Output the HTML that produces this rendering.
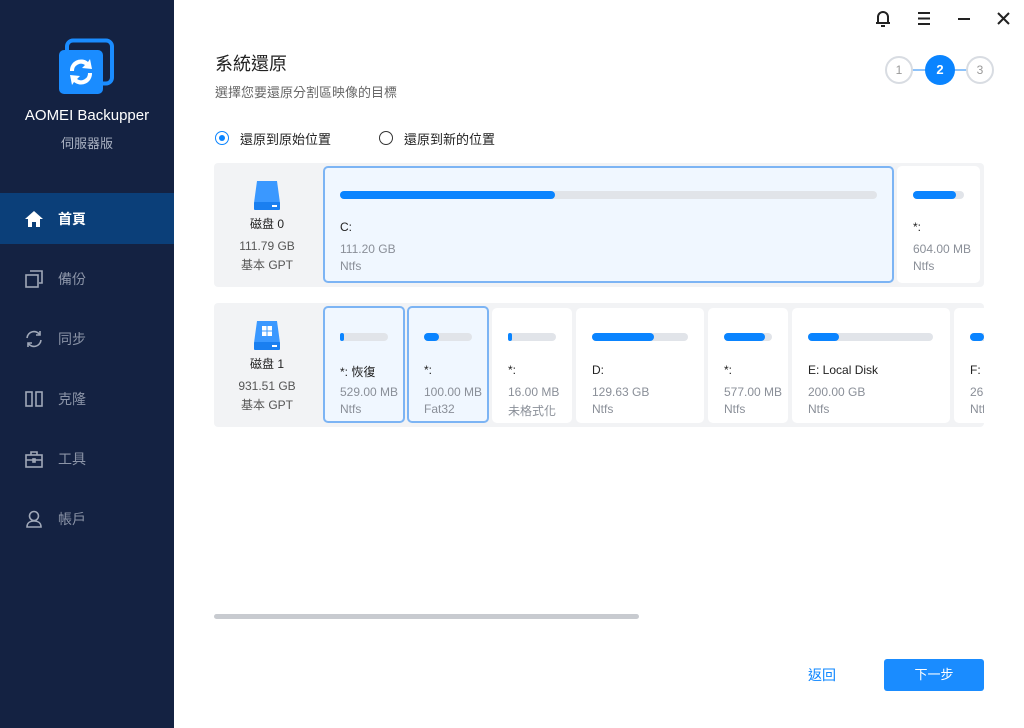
<!DOCTYPE html>
<html><head><meta charset="utf-8"><style>
*{margin:0;padding:0;box-sizing:border-box}
body{width:1024px;height:728px;overflow:hidden;background:#fff;font-family:"Liberation Sans","Noto Sans CJK TC",sans-serif;position:relative;color:#222}
.side{position:absolute;left:0;top:0;width:174px;height:728px;background:#142242}
.abs{position:absolute}
.nav{position:absolute;left:0;width:174px;height:51px;display:flex;align-items:center;padding-left:24px;color:#8b94a7;font-size:14px}
.nav svg{margin-right:14px}
.panel{position:absolute;left:214px;width:770px;height:124px;background:#f2f3f5;border-radius:4px;overflow:hidden}
.card{position:absolute;background:#fff;border-radius:5px;overflow:hidden;white-space:nowrap}
.card.sel{background:#f0f7ff;border:2px solid #7cb4f4}
.bar{position:absolute;height:8px;border-radius:4px;background:#e1e4e9}
.bar i{display:block;height:8px;border-radius:4px;background:#0a84ff}
.t{position:absolute;font-size:12px;color:#222}
.g{position:absolute;font-size:12px;color:#8a8f98}
.dl{position:absolute;text-align:center;width:100px;font-size:12px;color:#555}
</style></head><body>
<div class="side">
 <svg class="abs" style="left:58px;top:38px" width="58" height="58" viewBox="0 0 58 58">
  <rect x="9" y="2.5" width="45" height="43" rx="6" fill="none" stroke="#1a8cff" stroke-width="4"/>
  <rect x="1" y="12" width="44" height="44" rx="5" fill="#1a8cff"/>
  <path d="M12 33a11 11 0 0 1 18-9l2-3 2 10-10-1 3-3a7 7 0 0 0-11 6z" fill="#fff"/>
  <path d="M34 35a11 11 0 0 1-18 9l-2 3-2-10 10 1-3 3a7 7 0 0 0 11-6z" fill="#fff"/>
 </svg>
 <div class="abs" style="left:0;width:174px;top:107px;text-align:center;color:#fff;font-size:15px">AOMEI Backupper</div>
 <div class="abs" style="left:0;width:174px;top:133px;text-align:center;color:#aab2c2;font-size:13px">伺服器版</div>
 <div class="nav" style="top:193px;background:#0b3f79;color:#fff;font-weight:bold">
  <svg width="20" height="18" viewBox="0 0 20 18"><path d="M10 1L1 9h3v8h4v-5h4v5h4V9h3z" fill="#fff"/></svg>首頁</div>
 <div class="nav" style="top:253px"><svg width="20" height="20" viewBox="0 0 20 20" fill="none" stroke="#a0a8b8" stroke-width="1.6"><rect x="2" y="6" width="12" height="12"/><path d="M6 2h12v12h-3"/></svg>備份</div>
 <div class="nav" style="top:313px"><svg width="20" height="20" viewBox="0 0 20 20" fill="none" stroke="#a0a8b8" stroke-width="1.6"><path d="M3 9a7 7 0 0 1 13-3M17 11a7 7 0 0 1-13 3"/><path d="M16 2v4h-4M4 18v-4h4"/></svg>同步</div>
 <div class="nav" style="top:373px"><svg width="20" height="20" viewBox="0 0 20 20" fill="none" stroke="#a0a8b8" stroke-width="1.6"><rect x="2" y="3" width="6" height="14"/><rect x="12" y="3" width="6" height="14"/></svg>克隆</div>
 <div class="nav" style="top:433px"><svg width="20" height="20" viewBox="0 0 20 20" fill="none" stroke="#a0a8b8" stroke-width="1.6"><rect x="2" y="6" width="16" height="12"/><path d="M7 6V3h6v3M2 11h16"/><rect x="9" y="10" width="2" height="3"/></svg>工具</div>
 <div class="nav" style="top:493px"><svg width="20" height="20" viewBox="0 0 20 20" fill="none" stroke="#a0a8b8" stroke-width="1.6"><circle cx="10" cy="7" r="4.5"/><path d="M3 18c0-4 3-6 7-6s7 2 7 6z"/></svg>帳戶</div>
</div>

<svg class="abs" style="left:874px;top:10px" width="140" height="18" viewBox="0 0 140 18" fill="none" stroke="#222" stroke-width="2">
 <path d="M4 13V7a5 5 0 0 1 10 0v6zM2 13h14M7 16h4"/>
 <path d="M44 3h12M44 8.5h12M44 14h12"/>
 <path d="M84 9h12"/>
 <path d="M124 3l11 11M135 3l-11 11"/>
</svg>
<div class="abs" style="left:215px;top:50px;font-size:18px;color:#222">系統還原</div>
<div class="abs" style="left:215px;top:82px;font-size:13px;color:#666">選擇您要還原分割區映像的目標</div>
<div class="abs" style="left:906px;top:69px;width:20px;height:2px;background:#8ec3fa"></div>
<div class="abs" style="left:946px;top:69px;width:26px;height:2px;background:#8ec3fa"></div>
<div class="abs" style="left:885px;top:56px;width:28px;height:28px;border-radius:50%;border:2px solid #d8dce2;background:#fff;text-align:center;line-height:24px;font-size:12px;color:#999">1</div>
<div class="abs" style="left:925px;top:55px;width:30px;height:30px;border-radius:50%;background:#0a84ff;text-align:center;line-height:30px;font-size:13px;color:#fff;font-weight:bold">2</div>
<div class="abs" style="left:966px;top:56px;width:28px;height:28px;border-radius:50%;border:2px solid #d8dce2;background:#fff;text-align:center;line-height:24px;font-size:12px;color:#999">3</div>

<div class="abs" style="left:215px;top:131px;width:14px;height:14px;border-radius:50%;border:1.5px solid #0a84ff"><div style="margin:2.5px;width:6px;height:6px;border-radius:50%;background:#0a84ff"></div></div>
<div class="abs" style="left:240px;top:129px;font-size:13px">還原到原始位置</div>
<div class="abs" style="left:379px;top:131px;width:14px;height:14px;border-radius:50%;border:1.5px solid #333"></div>
<div class="abs" style="left:404px;top:129px;font-size:13px">還原到新的位置</div>

<div class="panel" style="top:163px">
 <svg class="abs" style="left:38px;top:17px" width="30" height="32" viewBox="0 0 30 32"><path d="M5 1h20l3 22H2z" fill="#3a98ff"/><rect x="2" y="22" width="26" height="8" rx="1" fill="#1a7ff0"/><rect x="20" y="25" width="5" height="2" fill="#fff"/></svg>
 <div class="dl" style="left:3px;top:52px;color:#222">磁盘 0</div>
 <div class="dl" style="left:3px;top:76px">111.79 GB</div>
 <div class="dl" style="left:3px;top:93px">基本 GPT</div>
 <div class="card sel" style="left:109px;top:3px;width:571px;height:117px">
  <div class="bar" style="left:15px;top:23px;width:537px"><i style="width:215px"></i></div>
  <div class="t" style="left:15px;top:52px">C:</div>
  <div class="g" style="left:15px;top:74px">111.20 GB</div>
  <div class="g" style="left:15px;top:91px">Ntfs</div>
 </div>
 <div class="card" style="left:683px;top:3px;width:83px;height:117px">
  <div class="bar" style="left:16px;top:25px;width:51px"><i style="width:43px"></i></div>
  <div class="t" style="left:16px;top:54px">*:</div>
  <div class="g" style="left:16px;top:76px">604.00 MB</div>
  <div class="g" style="left:16px;top:93px">Ntfs</div>
 </div>
</div>

<div class="panel" style="top:303px">
 <svg class="abs" style="left:38px;top:17px" width="30" height="32" viewBox="0 0 30 32"><path d="M5 1h20l3 22H2z" fill="#3a98ff"/><rect x="2" y="22" width="26" height="8" rx="1" fill="#1a7ff0"/><rect x="20" y="25" width="5" height="2" fill="#fff"/><path d="M10 6h4.5v4.5H10zM15.5 6H20v4.5h-4.5zM10 11.5h4.5V16H10zM15.5 11.5H20V16h-4.5z" fill="#fff"/></svg>
 <div class="dl" style="left:3px;top:52px;color:#222">磁盘 1</div>
 <div class="dl" style="left:3px;top:76px">931.51 GB</div>
 <div class="dl" style="left:3px;top:93px">基本 GPT</div>
 <div class="card sel" style="left:109px;top:3px;width:82px;height:117px">
  <div class="bar" style="left:15px;top:25px;width:48px"><i style="width:4px"></i></div>
  <div class="t" style="left:15px;top:55px">*: 恢復</div>
  <div class="g" style="left:15px;top:77px">529.00 MB</div>
  <div class="g" style="left:15px;top:94px">Ntfs</div>
 </div>
 <div class="card sel" style="left:193px;top:3px;width:82px;height:117px">
  <div class="bar" style="left:15px;top:25px;width:48px"><i style="width:15px"></i></div>
  <div class="t" style="left:15px;top:55px">*:</div>
  <div class="g" style="left:15px;top:77px">100.00 MB</div>
  <div class="g" style="left:15px;top:94px">Fat32</div>
 </div>
 <div class="card" style="left:278px;top:5px;width:80px;height:115px">
  <div class="bar" style="left:16px;top:25px;width:48px"><i style="width:4px"></i></div>
  <div class="t" style="left:16px;top:55px">*:</div>
  <div class="g" style="left:16px;top:77px">16.00 MB</div>
  <div class="g" style="left:16px;top:94px">未格式化</div>
 </div>
 <div class="card" style="left:362px;top:5px;width:128px;height:115px">
  <div class="bar" style="left:16px;top:25px;width:96px"><i style="width:62px"></i></div>
  <div class="t" style="left:16px;top:55px">D:</div>
  <div class="g" style="left:16px;top:77px">129.63 GB</div>
  <div class="g" style="left:16px;top:94px">Ntfs</div>
 </div>
 <div class="card" style="left:494px;top:5px;width:80px;height:115px">
  <div class="bar" style="left:16px;top:25px;width:48px"><i style="width:41px"></i></div>
  <div class="t" style="left:16px;top:55px">*:</div>
  <div class="g" style="left:16px;top:77px">577.00 MB</div>
  <div class="g" style="left:16px;top:94px">Ntfs</div>
 </div>
 <div class="card" style="left:578px;top:5px;width:158px;height:115px">
  <div class="bar" style="left:16px;top:25px;width:125px"><i style="width:31px"></i></div>
  <div class="t" style="left:16px;top:55px">E: Local Disk</div>
  <div class="g" style="left:16px;top:77px">200.00 GB</div>
  <div class="g" style="left:16px;top:94px">Ntfs</div>
 </div>
 <div class="card" style="left:740px;top:5px;width:80px;height:115px">
  <div class="bar" style="left:16px;top:25px;width:48px"><i style="width:14px"></i></div>
  <div class="t" style="left:16px;top:55px">F: Data</div>
  <div class="g" style="left:16px;top:77px">263.00 GB</div>
  <div class="g" style="left:16px;top:94px">Ntfs</div>
 </div>
</div>

<div class="abs" style="left:214px;top:614px;width:425px;height:5px;border-radius:3px;background:#c8cbd0"></div>
<div class="abs" style="left:808px;top:665px;font-size:14px;color:#0a84ff">返回</div>
<div class="abs" style="left:884px;top:659px;width:100px;height:32px;border-radius:3px;background:#1a8cff;color:#fff;font-size:13px;text-align:center;line-height:32px">下一步</div>
</body></html>
